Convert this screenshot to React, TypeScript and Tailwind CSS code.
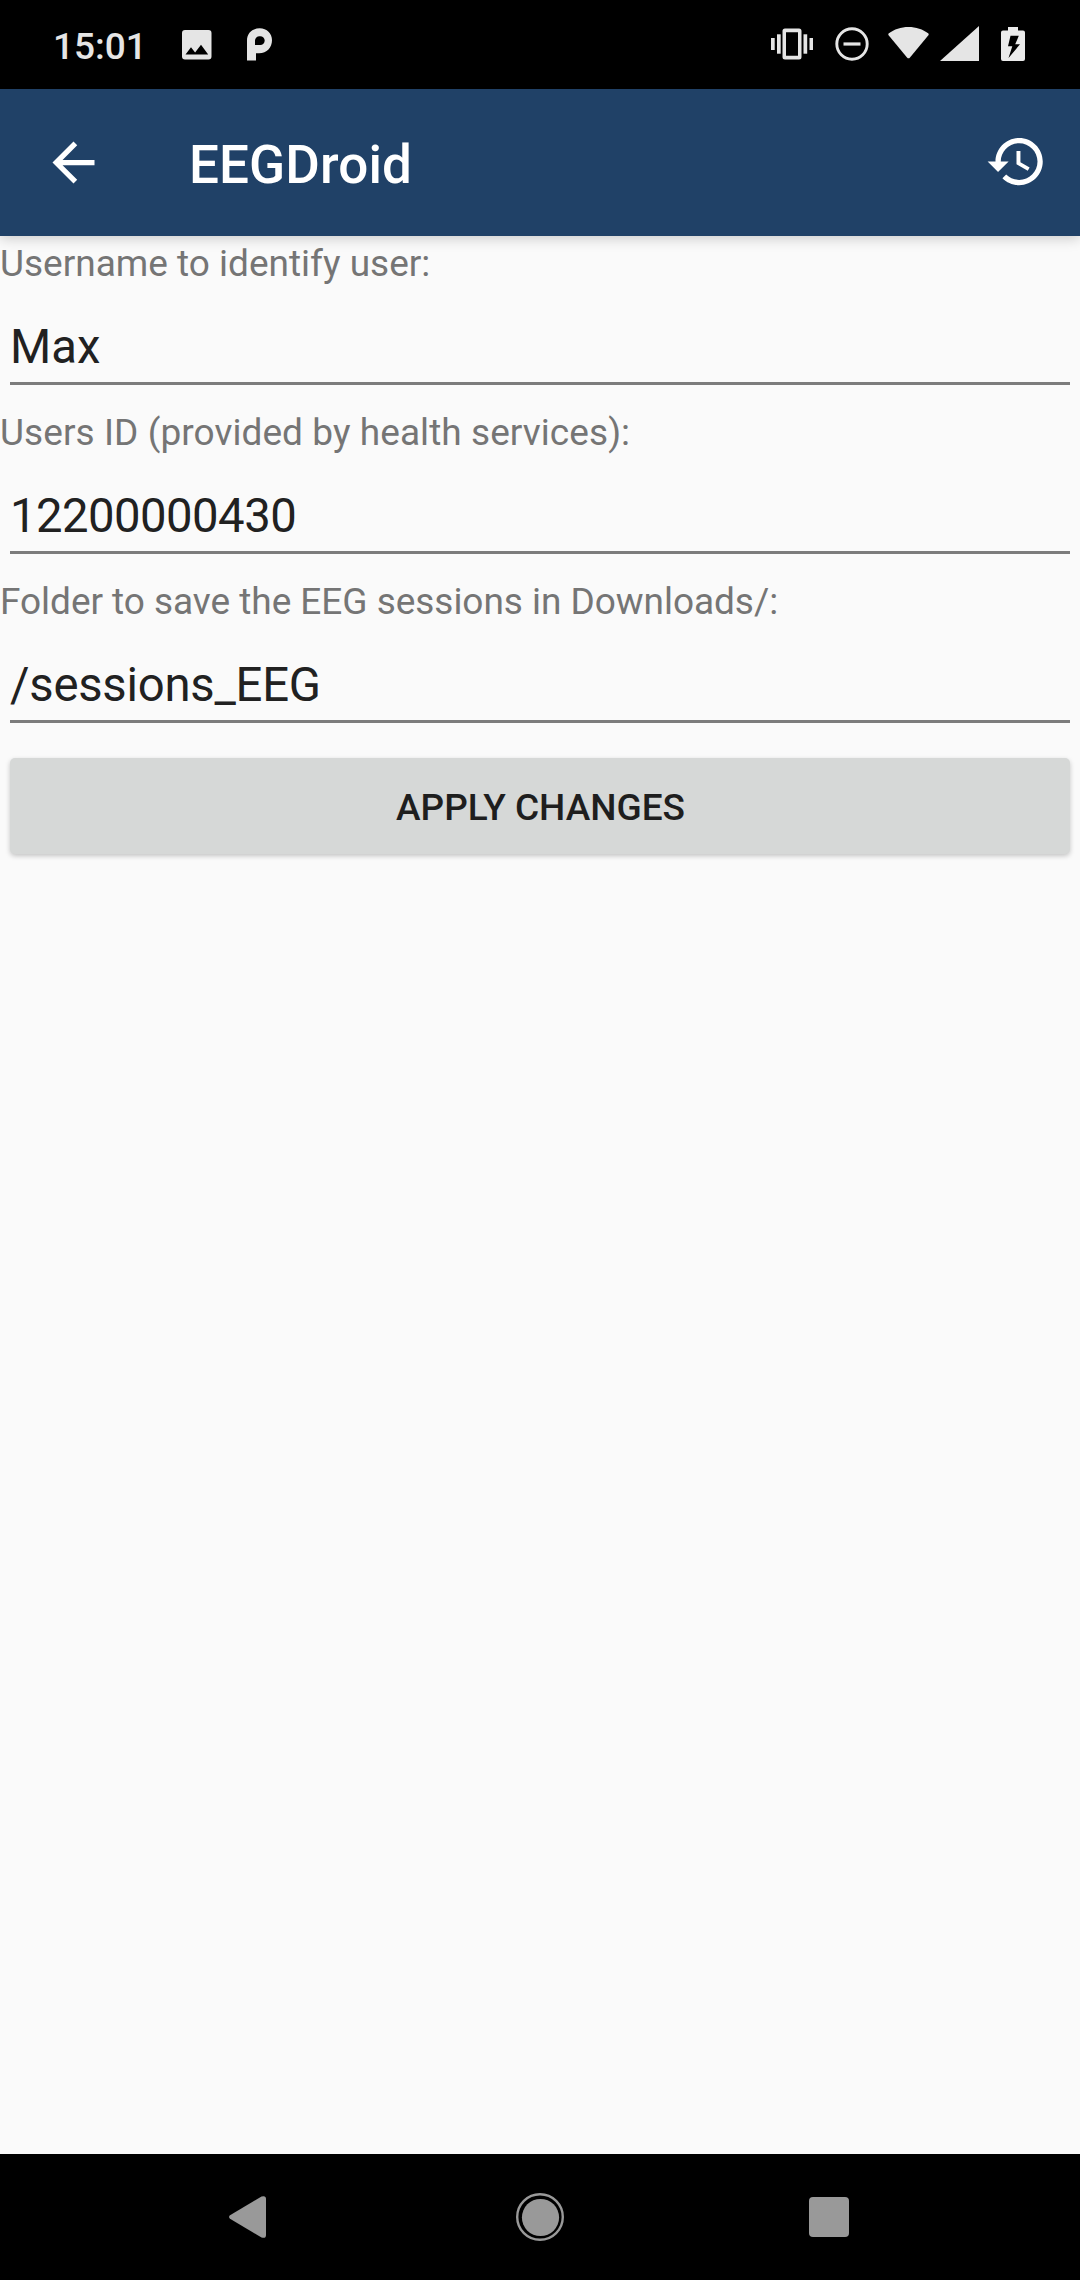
import React from "react";

type IconProps = { className?: string };

function PictureIcon({ className }: IconProps) {
  return (
    <svg viewBox="0 0 30 30" className={className} fill="#e5e5e5">
      <path
        fillRule="evenodd"
        d="M3 0h23.500a3 3 0 0 1 3 3v23.500a3 3 0 0 1-3 3H3a3 3 0 0 1-3-3V3a3 3 0 0 1 3-3zM3.500 24.500h22.700L19 14.800l-5.900 7.600L9 17.300z"
      />
    </svg>
  );
}

function PandoraIcon({ className }: IconProps) {
  return (
    <svg viewBox="0 0 26 33" className={className} fill="#e5e5e5">
      <path
        fillRule="evenodd"
        d="M0 32.500V12.500C0 5 5.500 0.300 12.700 0.300S25 5.300 25 12.300s-5 13-13 13H9v7.200zM8 17h5.300a4.400 4.400 0 0 0 0-8.800H12.500a4.400 4.400 0 0 0-4.500 4.400z"
      />
    </svg>
  );
}

function VibrateIcon({ className }: IconProps) {
  return (
    <svg viewBox="0 0 42 32" className={className} fill="#e5e5e5">
      <rect x="0" y="10" width="3.700" height="12" />
      <rect x="6" y="6.300" width="3.700" height="19.400" />
      <rect x="32.500" y="6.300" width="3.700" height="19.400" />
      <rect x="38.500" y="10" width="3.500" height="12" />
      <path
        fillRule="evenodd"
        d="M14 .6h14a2.500 2.500 0 0 1 2.500 2.500v25.800a2.500 2.500 0 0 1-2.500 2.500H14a2.500 2.500 0 0 1-2.500-2.500V3.100A2.500 2.500 0 0 1 14 .6zM15 4.300v23.400h12V4.300z"
      />
    </svg>
  );
}

function DoNotDisturbIcon({ className }: IconProps) {
  return (
    <svg viewBox="0 0 34 34" className={className} fill="none" stroke="#e5e5e5">
      <circle cx="17" cy="17" r="15.200" strokeWidth="2.900" />
      <path d="M8.500 17h17" strokeWidth="3.200" />
    </svg>
  );
}

function WifiIcon({ className }: IconProps) {
  return (
    <svg viewBox="0 0 41 32" className={className} fill="#e5e5e5">
      <path d="M0.600 8.200Q-0.100 7.200 0.900 6.300C6 2.300 13 0 20.500 0S35 2.300 40.100 6.300Q41.100 7.200 40.400 8.200L22 30.500Q20.500 32.200 19 30.500z" />
    </svg>
  );
}

function SignalIcon({ className }: IconProps) {
  return (
    <svg viewBox="0 0 39 35" className={className} fill="#e5e5e5">
      <path d="M39 0v35H0z" />
    </svg>
  );
}

function BatteryIcon({ className }: IconProps) {
  return (
    <svg viewBox="0 0 24 34" className={className} fill="#ebebeb">
      <path
        fillRule="evenodd"
        d="M7 0h10v3.500h5A2 2 0 0 1 24 5.500V32a2 2 0 0 1-2 2H2a2 2 0 0 1-2-2V5.500A2 2 0 0 1 2 3.500h5zM9.500 8.800L7 19.200h4.300L7.500 31 19 17.300h-4.800L17.800 8.800z"
      />
    </svg>
  );
}

function StatusBar() {
  return (
    <div className="flex h-[89px] items-start bg-black text-[#e5e5e5]">
      <span className="ml-[53px] mt-[25px] w-[90px] text-[37px] font-medium leading-[43px]">
        15:01
      </span>
      <PictureIcon className="ml-[38.500px] mt-[30px] h-[30px] w-[30px]" />
      <PandoraIcon className="ml-[35.500px] mt-[28px] h-[33px] w-[26px]" />
      <div className="ml-auto mr-[55px] flex items-start">
        <VibrateIcon className="mt-[28px] h-[32px] w-[42px]" />
        <DoNotDisturbIcon className="ml-[21.500px] mt-[27px] h-[34px] w-[34px]" />
        <WifiIcon className="ml-[19.500px] mt-[27px] h-[32px] w-[41px]" />
        <SignalIcon className="ml-[11px] mt-[26px] h-[35px] w-[39px]" />
        <BatteryIcon className="ml-[22px] mt-[27px] h-[34px] w-[24px]" />
      </div>
    </div>
  );
}

function AppBar() {
  return (
    <header className="relative z-10 flex h-[147px] items-center bg-[#204167] text-white shadow-[0_3px_12px_rgba(0,0,0,0.18)]">
      <button className="ml-[42px] h-[63px] w-[63px]" aria-label="Back">
        <svg viewBox="0 0 24 24" className="h-full w-full" fill="currentColor">
          <path d="M20 11H7.830l5.590-5.590L12 4l-8 8 8 8 1.410-1.410L7.830 13H20v-2z" />
        </svg>
      </button>
      <h1 className="ml-[84px] pt-[5px] text-[53px] font-medium leading-[62px] tracking-[0.120px]">
        EEGDroid
      </h1>
      <button className="ml-auto mr-[32px] h-[63px] w-[63px]" aria-label="History">
        <svg viewBox="0 0 24 24" className="h-full w-full -translate-y-px" fill="currentColor">
          <path d="M13 3c-4.970 0-9 4.030-9 9H1l3.890 3.890.07.14L9 12H6c0-3.870 3.130-7 7-7s7 3.130 7 7-3.130 7-7 7c-1.930 0-3.680-.79-4.940-2.060l-1.420 1.420C8.270 19.990 10.510 21 13 21c4.970 0 9-4.030 9-9s-4.030-9-9-9zm-1 5v5l4.280 2.540.72-1.210-3.500-2.080V8H12z" />
        </svg>
      </button>
    </header>
  );
}

type FieldProps = {
  label: string;
  value: string;
  labelTracking?: string;
  valueTracking?: string;
};

function Field({ label, value, labelTracking = "", valueTracking = "" }: FieldProps) {
  return (
    <label className="block h-[169px]">
      <span
        className={`block h-[50px] whitespace-nowrap pt-[6px] text-[37px] leading-[43px] text-[#757575] ${labelTracking}`}
      >
        {label}
      </span>
      <input
        type="text"
        defaultValue={value}
        className={`mx-[10px] block h-[99px] w-[1060px] border-b-[3px] border-[#7c7c7c] bg-transparent pt-[26px] text-[47.250px] text-[#212121] outline-none ${valueTracking}`}
      />
    </label>
  );
}

function NavigationBar() {
  return (
    <nav className="flex h-[126px] items-center bg-black">
      <svg viewBox="0 0 37 42" className="ml-[229px] h-[42px] w-[37px]" fill="#999999">
        <path d="M1 19.300L32.500 0.600Q36.900-1 37 3V39Q36.900 43 32.500 41.400L1 22.700Q-0.900 21 1 19.300z" />
      </svg>
      <svg viewBox="0 0 48 48" className="ml-[250px] h-[48px] w-[48px]" fill="#999999">
        <circle cx="24" cy="24" r="22.800" fill="none" stroke="#999999" strokeWidth="2.400" />
        <circle cx="24.500" cy="24.500" r="18.600" />
      </svg>
      <span className="ml-[245px] h-[40px] w-[40px] rounded-[4px] bg-[#999999]" />
    </nav>
  );
}

export default function App() {
  return (
    <div className="flex h-[2280px] w-[1080px] flex-col overflow-hidden bg-[#fafafa] font-['Roboto',sans-serif]">
      <StatusBar />
      <AppBar />
      <main className="flex-1">
        <Field label="Username to identify user:" value="Max" />
        <Field
          label="Users ID (provided by health services):"
          value="12200000430"
          labelTracking="tracking-[0.07px]"
          valueTracking="tracking-[-0.54px]"
        />
        <Field
          label="Folder to save the EEG sessions in Downloads/:"
          value="/sessions_EEG"
          labelTracking="tracking-[-0.04px]"
          valueTracking="tracking-[-0.24px]"
        />
        <button className="mx-[10px] mt-[15px] block h-[96px] w-[1060px] rounded-[5px] bg-[#d6d8d7] pt-[3px] pl-[1px] text-[37px] font-medium leading-[43px] text-[#1e1e1e] shadow-[0_2px_5px_rgba(0,0,0,0.22)]">
          APPLY CHANGES
        </button>
      </main>
      <NavigationBar />
    </div>
  );
}
